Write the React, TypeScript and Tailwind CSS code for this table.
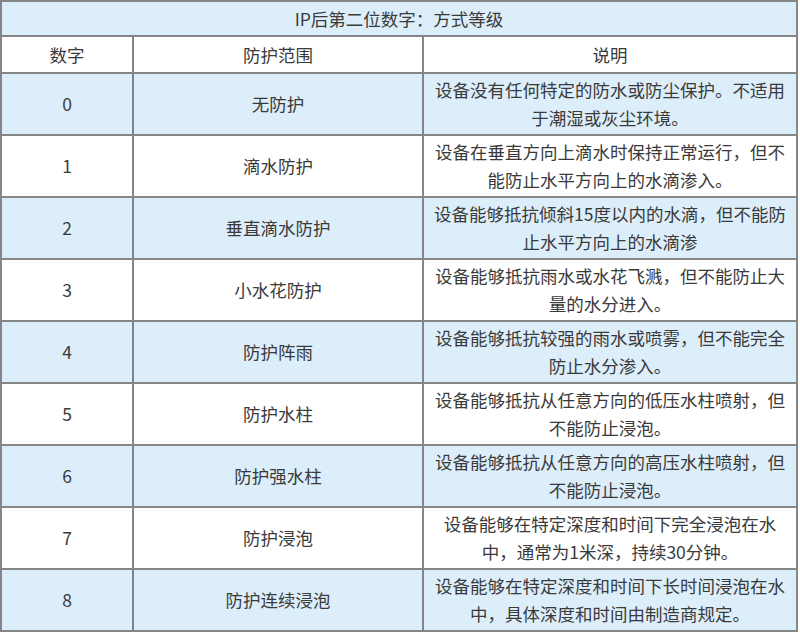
import React from 'react';

interface Level {
    digit: string;
    scope: string;
    lines: string[];
}

const levels: Level[] = [
    { digit: '0', scope: '无防护', lines: ['设备没有任何特定的防水或防尘保护。不适用', '于潮湿或灰尘环境。'] },
    { digit: '1', scope: '滴水防护', lines: ['设备在垂直方向上滴水时保持正常运行，但不', '能防止水平方向上的水滴渗入。'] },
    { digit: '2', scope: '垂直滴水防护', lines: ['设备能够抵抗倾斜15度以内的水滴，但不能防', '止水平方向上的水滴渗'] },
    { digit: '3', scope: '小水花防护', lines: ['设备能够抵抗雨水或水花飞溅，但不能防止大', '量的水分进入。'] },
    { digit: '4', scope: '防护阵雨', lines: ['设备能够抵抗较强的雨水或喷雾，但不能完全', '防止水分渗入。'] },
    { digit: '5', scope: '防护水柱', lines: ['设备能够抵抗从任意方向的低压水柱喷射，但', '不能防止浸泡。'] },
    { digit: '6', scope: '防护强水柱', lines: ['设备能够抵抗从任意方向的高压水柱喷射，但', '不能防止浸泡。'] },
    { digit: '7', scope: '防护浸泡', lines: ['设备能够在特定深度和时间下完全浸泡在水', '中，通常为1米深，持续30分钟。'] },
    { digit: '8', scope: '防护连续浸泡', lines: ['设备能够在特定深度和时间下长时间浸泡在水', '中，具体深度和时间由制造商规定。'] },
];

const cell = 'border-2 border-[#858585] text-center align-middle';

export default function App() {
    return (
        <div className="w-[800px] h-[636px] bg-white font-['Noto_Sans_CJK_SC','Noto_Sans',sans-serif] text-[#3a3a3a]">
            <table className="w-[798px] border-collapse table-fixed text-[17.5px] leading-[28px]">
                <colgroup>
                    <col className="w-[132px]" />
                    <col className="w-[290px]" />
                    <col />
                </colgroup>
                <thead>
                    <tr className="h-[35px] bg-[#ddeefb]">
                        <th colSpan={3} className={`${cell} font-normal`}>IP后第二位数字：方式等级</th>
                    </tr>
                    <tr className="h-[37px] bg-white">
                        <th className={`${cell} font-normal`}>数字</th>
                        <th className={`${cell} font-normal`}>防护范围</th>
                        <th className={`${cell} font-normal`}>说明</th>
                    </tr>
                </thead>
                <tbody>
                    {levels.map((l, i) => (
                        <tr key={l.digit} className={`h-[62px] ${i % 2 === 0 ? 'bg-[#ddeefb]' : 'bg-white'}`}>
                            <td className={cell}>{l.digit}</td>
                            <td className={cell}>{l.scope}</td>
                            <td className={cell}>
                                {l.lines.map(line => (
                                    <div key={line} className="whitespace-nowrap">{line}</div>
                                ))}
                            </td>
                        </tr>
                    ))}
                </tbody>
            </table>
        </div>
    );
}
